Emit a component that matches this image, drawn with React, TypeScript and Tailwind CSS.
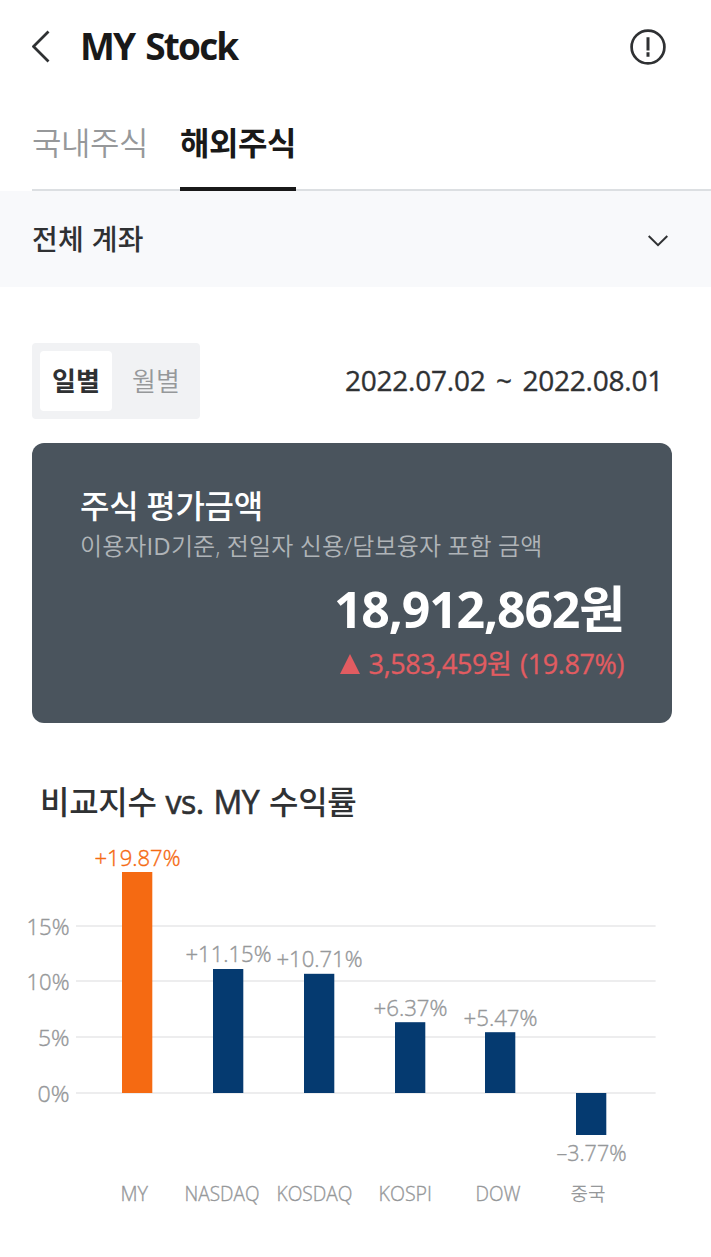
import { useState } from 'react'

const gridLines = [
  { label: '15%', y: 86, x: 26.5, width: 43 },
  { label: '10%', y: 141, x: 26.5, width: 43 },
  { label: '5%', y: 197, x: 38, width: 31.5 },
  { label: '0%', y: 253, x: 37.5, width: 32 },
]

const bars = [
  { name: 'MY', x: 122, top: 32, height: 221, value: '+19.87%', valueX: 94.5, valueY: 26, valueWidth: 86, nameX: 120.5, nameWidth: 27.5 },
  { name: 'NASDAQ', x: 213, top: 129, height: 124, value: '+11.15%', valueX: 185.5, valueY: 122, valueWidth: 86, nameX: 184.5, nameWidth: 75 },
  { name: 'KOSDAQ', x: 304, top: 133.8, height: 119.2, value: '+10.71%', valueX: 276.5, valueY: 127, valueWidth: 86, nameX: 276.5, nameWidth: 76 },
  { name: 'KOSPI', x: 395, top: 182.2, height: 70.8, value: '+6.37%', valueX: 373.5, valueY: 176, valueWidth: 74, nameX: 378.5, nameWidth: 53.5 },
  { name: 'DOW', x: 485, top: 192.2, height: 60.8, value: '+5.47%', valueX: 463.5, valueY: 186, valueWidth: 74, nameX: 475.5, nameWidth: 45 },
  { name: '중국', x: 576, top: 253, height: 42, value: '–3.77%', valueX: 556.5, valueY: 321, valueWidth: 70, nameX: 570.5, nameWidth: 35 },
]

function Header() {
  return (
    <header className="flex h-[92px] items-center justify-between pl-8 pr-[45px]">
      <div className="flex items-center">
        <svg width="18" height="34" viewBox="0 0 18 34" className="mt-[2px]" fill="none" stroke="#2f3133" strokeWidth="2.8">
          <path d="M16.5 1.5 L1.5 16.5 L16.5 31.5" strokeLinejoin="round" />
        </svg>
        <h1 className="-mt-[2px] ml-[30px] whitespace-nowrap text-[37px] font-bold leading-none tracking-[-1.8px] [word-spacing:3px] text-[#191919]">
          MY Stock
        </h1>
      </div>
      <svg width="36" height="36" viewBox="0 0 36 36" className="mt-[2px]" fill="none" stroke="#2f3133">
        <circle cx="18" cy="18" r="16.4" strokeWidth="2.7" />
        <path d="M18 8.3 V21.5 M18 23.3 V27.7" strokeWidth="3" />
      </svg>
    </header>
  )
}

function Tabs() {
  const [tab, setTab] = useState('해외주식')

  return (
    <nav className="ml-8 flex h-[99px] gap-8 shadow-[inset_0_-2px_0_#dcdfe2]">
      {['국내주식', '해외주식'].map((name) => (
        <button
          key={name}
          onClick={() => setTab(name)}
          className={
            tab === name
              ? 'w-[116px] whitespace-nowrap border-b-4 border-[#191919] pt-[6px] text-[32px] font-bold leading-none tracking-[-0.44px] text-[#191919]'
              : 'w-[116px] whitespace-nowrap border-b-4 border-transparent pt-[6px] text-[32px] font-[350] leading-none tracking-[-0.44px] text-[#96989a]'
          }
        >
          {name}
        </button>
      ))}
    </nav>
  )
}

function PeriodRow() {
  const [period, setPeriod] = useState('일별')

  return (
    <div className="mt-14 flex items-center justify-between pl-8 pr-[48px]">
      <div className="flex h-[76px] rounded bg-[#f1f2f4] p-2">
        {['일별', '월별'].map((name) => (
          <button
            key={name}
            onClick={() => setPeriod(name)}
            className={
              period === name
                ? 'h-[60px] w-[72px] rounded bg-white text-[26px] font-bold leading-none text-[#2f3133]'
                : 'h-[60px] w-[80px] pl-[8px] text-left text-[26px] font-[350] leading-none text-[#96989a]'
            }
          >
            <span className={period === name ? '' : 'ml-3'}>{name}</span>
          </button>
        ))}
      </div>
      <p className="-mt-[3px] whitespace-nowrap text-[28px] leading-none tracking-[-0.22px] [-webkit-text-stroke:0.35px] [word-spacing:3.5px] text-[#2f3133]">
        2022.07.02 ~ 2022.08.01
      </p>
    </div>
  )
}

function SummaryCard() {
  return (
    <section className="mx-8 mt-6 h-[280px] w-[640px] rounded-xl bg-[#4a545d] px-12 pt-[46px] text-white">
      <h2 className="text-[32px] font-medium leading-[34px] tracking-[-0.3px]">주식 평가금액</h2>
      <p className="mt-[10px] whitespace-nowrap text-[24px] font-[350] leading-[26px] tracking-[0.1px] text-[#b0b4b8]">
        이용자<span className="font-normal">ID</span>기준, 전일자 신용/담보융자 포함 금액
      </p>
      <p className="mt-[24px] text-right text-[50px] font-bold leading-[52px] tracking-[-1.2px]">18,912,862원</p>
      <div className="mt-[14px] flex items-center justify-end gap-[9px] text-[#e25c61]">
        <svg width="20" height="20" viewBox="0 0 20 20" fill="currentColor">
          <path d="M10 0 L20 20 H0 Z" />
        </svg>
        <span className="whitespace-nowrap text-[27px] leading-[30px] tracking-[-0.4px] [-webkit-text-stroke:0.3px] [word-spacing:2px]">
          3,583,459원 (19.87%)
        </span>
      </div>
    </section>
  )
}

function ReturnChart() {
  return (
    <svg width="711" height="417" viewBox="0 0 711 417" className="block">
      {gridLines.map((line) => (
        <g key={line.label}>
          <rect x="76" y={line.y - 1} width="579.6" height="2" fill="#ededee" />
          <text
            x={line.x}
            y={line.y + 9}
            fontSize="22.5"
            fontWeight="350"
            fill="#96989a"
            stroke="#96989a"
            strokeWidth="0.4"
            textLength={line.width}
            lengthAdjust="spacingAndGlyphs"
          >
            {line.label}
          </text>
        </g>
      ))}
      {bars.map((bar) => {
        const color = bar.name === 'MY' ? '#f56a12' : '#96989a'
        return (
          <g key={bar.name} fontWeight="350" fill="#96989a">
            <rect x={bar.x} y={bar.top} width="30.3" height={bar.height} fill={bar.name === 'MY' ? '#f56a12' : '#053a70'} />
            <text
              x={bar.valueX}
              y={bar.valueY}
              fontSize="22.5"
              fill={color}
              stroke={color}
              strokeWidth="0.4"
              textLength={bar.valueWidth}
              lengthAdjust="spacingAndGlyphs"
            >
              {bar.value}
            </text>
            <text
              x={bar.nameX}
              y="361"
              fontSize="19.5"
              stroke="#96989a"
              strokeWidth={bar.name === '중국' ? 0 : 0.35}
              textLength={bar.nameWidth}
              lengthAdjust="spacingAndGlyphs"
            >
              {bar.name}
            </text>
          </g>
        )
      })}
    </svg>
  )
}

export default function App() {
  return (
    <div className="h-[1257px] w-[711px] overflow-hidden bg-white font-['Open_Sans','Noto_Sans_CJK_KR',sans-serif]">
      <Header />
      <Tabs />
      <button className="flex h-24 w-full items-center justify-between bg-[#f8f9fb] pl-8 pr-[43px]">
        <span className="text-[28px] font-medium leading-none tracking-[0.3px] text-[#2f3133]">전체 계좌</span>
        <svg width="20" height="12" viewBox="0 0 20 12" className="mt-[3px]" fill="none" stroke="#2f3133" strokeWidth="2">
          <path d="M0.7 1 L10 10.2 L19.3 1" />
        </svg>
      </button>
      <PeriodRow />
      <SummaryCard />
      <h2 className="flex h-[117px] items-end whitespace-pre pb-[20px] pl-10 text-[32px] font-medium leading-[36px] tracking-[-0.3px] text-[#2f3133]">
        <span>비교지수 </span>
        <span className="ml-px tracking-[-0.5px] [-webkit-text-stroke:0.6px] [word-spacing:2px]">vs. MY </span>
        <span>수익률</span>
      </h2>
      <ReturnChart />
    </div>
  )
}
